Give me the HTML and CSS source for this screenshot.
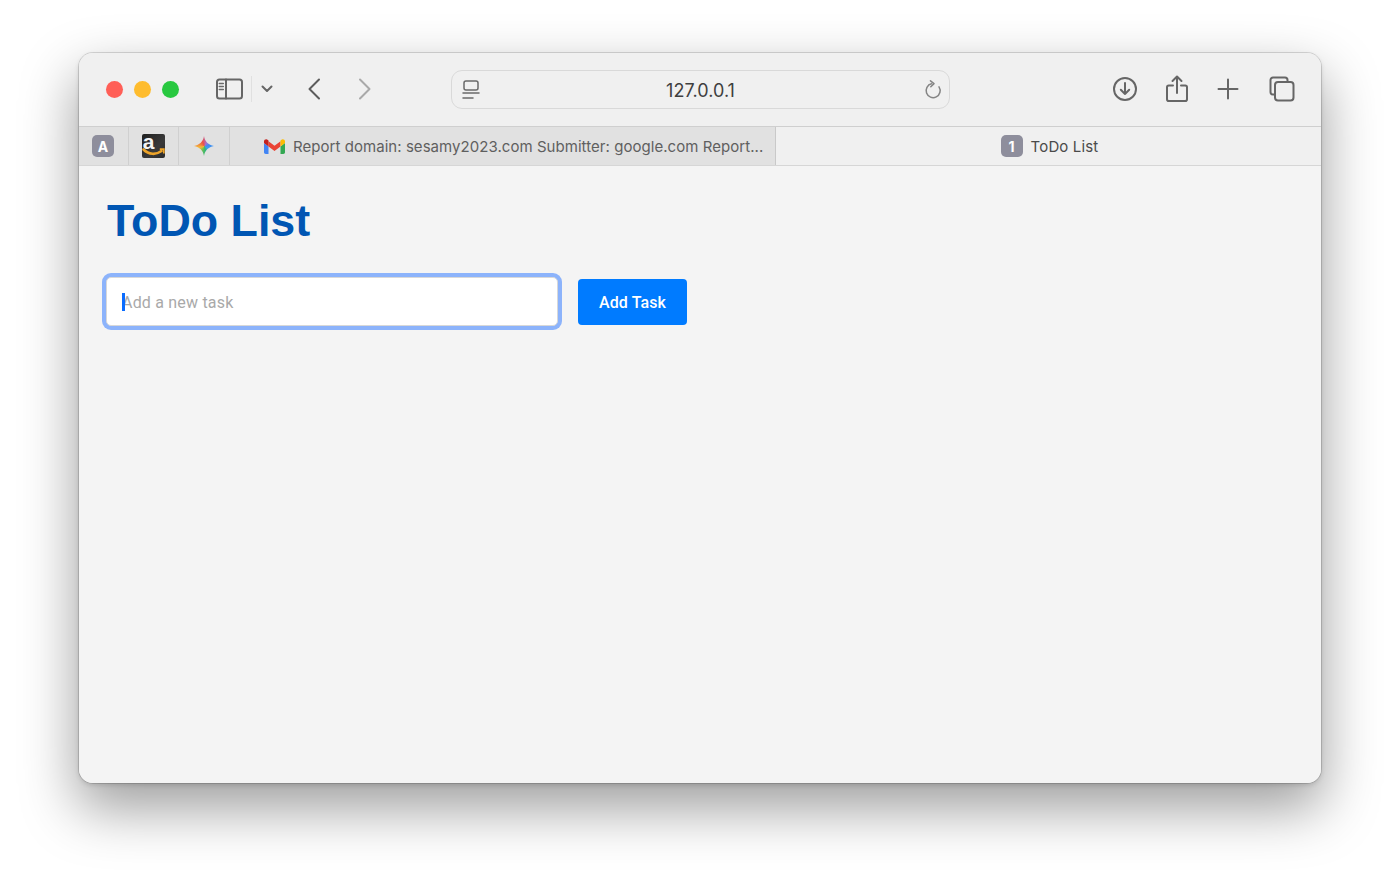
FILE: index.html
```html
<!DOCTYPE html>
<html lang="en">
<head>
<meta charset="utf-8">
<title>ToDo List</title>
<link rel="stylesheet" href="styles.css">
</head>
<body>
<div class="window">
  <header class="toolbar">
    <div class="lights">
      <span class="light red"></span><span class="light yellow"></span><span class="light green"></span>
    </div>
    <svg class="ic sidebar" width="28" height="22" viewBox="0 0 28 22"><rect x="2" y="1.500" width="25" height="19" rx="2.500" class="s2"/><path d="M11 1.500v19" class="s2"/><path d="M4.300 5.500h4M4.300 8.500h4M4.300 11.500h4" class="s15"/></svg>
    <span class="divider"></span>
    <svg class="ic chev" width="12" height="8" viewBox="0 0 12 8"><path d="M1.500 1.500 6 6l4.500-4.500" class="s2"/></svg>
    <svg class="ic back" width="14" height="22" viewBox="0 0 14 22"><path d="M12 1.500 2.500 11l9.500 9.500" class="s2"/></svg>
    <svg class="ic fwd" width="14" height="22" viewBox="0 0 14 22"><path d="M2 1.500 11.500 11 2 20.500" class="s2"/></svg>
    <div class="url">
      <svg class="ic" width="18" height="20" viewBox="0 0 18 20"><rect x="2" y="1" width="14" height="9" rx="2" class="s15"/><path d="M1 13h16M1 18h10" class="s15"/></svg>
      <span class="addr">127.0.0.1</span>
      <svg class="ic reload" width="18" height="20" viewBox="0 0 18 20"><path d="M7.500 3.800a7 7 0 1 0 7.500 3" class="s15"/><path d="M6.500 0.800 10 3.600 6.800 6.800" class="s15"/></svg>
    </div>
    <div class="actions">
      <svg class="ic" width="26" height="26" viewBox="0 0 26 26"><circle cx="13" cy="13" r="11" class="s2"/><path d="M13 7v11M8.800 13.800 13 18l4.200-4.200" class="s2"/></svg>
      <svg class="ic" width="24" height="28" viewBox="0 0 24 28"><path d="M8 10.500H3.800a1.800 1.800 0 0 0-1.800 1.800v12a1.800 1.800 0 0 0 1.800 1.800h16.400a1.800 1.800 0 0 0 1.800-1.800v-12a1.800 1.800 0 0 0-1.800-1.800H16" class="s2"/><path d="M12 18V2M7.500 6 12 1.500 16.500 6" class="s2"/></svg>
      <svg class="ic plus" width="22" height="22" viewBox="0 0 22 22"><path d="M11 1.500v19M1.500 11h19" class="s2"/></svg>
      <svg class="ic copies" width="26" height="26" viewBox="0 0 26 26"><path d="M5 18.500H4a2.500 2.500 0 0 1-2.500-2.500V4A2.500 2.500 0 0 1 4 1.500h12A2.500 2.500 0 0 1 18.500 4v1" class="s2"/><rect x="6" y="6" width="18.500" height="18.500" rx="3" class="s2"/></svg>
    </div>
  </header>
  <nav class="tabs">
    <div class="pin pin-nudge"><span class="badge">A</span></div>
    <div class="pin pin-nudge">
      <svg class="amz-logo" width="23" height="24" viewBox="0 0 23 24"><defs><linearGradient id="amzbg" x1="0" y1="0" x2="1" y2="1"><stop offset="0" stop-color="#1f1f1f"/><stop offset=".6" stop-color="#3a3a3a"/><stop offset="1" stop-color="#2a2a2a"/></linearGradient></defs><rect width="23" height="24" rx="2" fill="url(#amzbg)"/><text x=".8" y="15" class="amz">a</text><path d="M1.500 15.500c5.500 5.500 12.500 5.500 18 1.500" class="amz-smile"/><path d="M17.800 15.200h4v4.300" class="amz-arrow"/></svg>
    </div>
    <div class="pin pin-g"><span class="gem"></span></div>
    <div class="tab tab-inactive">
      <svg class="gmail" width="21" height="15" viewBox="0 0 21 15"><path d="M0 4v9.300C0 14.200.8 15 1.700 15h2.800V7.500z" fill="#4285f4"/><path d="M21 4v9.300c0 .9-.8 1.700-1.700 1.700h-2.800V7.500z" fill="#34a853"/><path d="M4.500 2.300 10.500 6.800l6-4.500v5.200L10.500 12l-6-4.500z" fill="#ea4335"/><path d="M0 2.500C0 .6 2.300-.5 3.900 1L4.500 1.500v6L0 4.100z" fill="#c5221f"/><path d="M21 2.500C21 .6 18.700-.5 17.100 1l-.6.500v6l4.500-3.400z" fill="#fbbc04"/></svg>
      <span class="tab-text">Report domain: sesamy2023.com Submitter: google.com Report...</span>
    </div>
    <div class="tab tab-active">
      <span class="badge">1</span>
      <span class="tab-text">ToDo List</span>
    </div>
  </nav>
  <main class="page">
    <h1>ToDo List</h1>
    <form class="add-form">
      <div class="field">
        <input type="text" placeholder="Add a new task">
        <span class="caret"></span>
      </div>
      <button type="button">Add Task</button>
    </form>
  </main>
</div>
</body>
</html>
```
FILE: styles.css
```css
* { box-sizing: border-box; }
html, body { margin: 0; height: 100%; }
body {
  background: #fff;
  padding: 53px 79px 104px;
  overflow: hidden;
  font-family: Inter, "Liberation Sans", sans-serif;
}
.window {
  height: 730px;
  border-radius: 14px;
  overflow: hidden;
  display: flex;
  flex-direction: column;
  background: #f4f4f4;
  box-shadow: 0 0 0 1px rgba(0,0,0,.13), 0 24px 55px 2px rgba(0,0,0,.38), 0 2px 5px rgba(0,0,0,.14);
}
.ic { display: block; flex: none; }
.s2 { fill: none; stroke: #666; stroke-width: 2; stroke-linecap: round; stroke-linejoin: round; }
.s15 { fill: none; stroke: #6a6a6a; stroke-width: 1.500; stroke-linecap: round; stroke-linejoin: round; }

.toolbar {
  height: 73px;
  flex: none;
  display: flex;
  align-items: center;
  padding: 0 26px 1px 27px;
  background: #f0f0f0;
}
.lights { display: flex; gap: 11px; }
.light { width: 17px; height: 17px; border-radius: 50%; }
.red { background: #ff5f57; }
.yellow { background: #febc2e; }
.green { background: #28c840; }
.sidebar { margin-left: 36px; }
.divider { width: 1px; height: 26px; background: #e0e0e0; margin-left: 8px; }
.chev { margin-left: 9px; }
.back { margin-left: 34px; }
.back .s2 { stroke: #5c5c5c; }
.fwd { margin-left: 37px; }
.fwd .s2 { stroke: #a9a9a9; }
.url {
  margin: 1px 0 0 79px;
  width: 499px;
  height: 39px;
  border: 1px solid #d9d9d9;
  border-radius: 11px;
  background: #f0f0f0;
  display: flex;
  align-items: center;
  justify-content: space-between;
  padding: 0 7px 0 10px;
}
.addr { font-size: 18px; color: #3f3f3f; letter-spacing: .05px; margin-right: 3px; padding-top: 1px; }
.reload .s15 { stroke: #858585; }
.actions {
  margin-left: auto;
  display: flex;
  align-items: center;
  gap: 27px;
}
.plus { margin-left: 1px; }
.copies { margin-left: 3px; }

.tabs {
  height: 40px;
  flex: none;
  display: flex;
  background: #f0f0f0;
  border-top: 1px solid #cfcfcf;
  border-bottom: 1px solid #d6d6d6;
}
.pin {
  width: 50px;
  flex: none;
  display: flex;
  align-items: center;
  justify-content: center;
  background: #e1e1e1;
  border-right: 1px solid #d0d0d0;
}
.pin-nudge { padding-right: 1px; }
.pin-g { width: 51px; }
.gem {
  width: 21px;
  height: 21px;
  background: conic-gradient(from -20deg, #ea4f4b 0deg, #a66fd0 45deg, #3e8cf2 95deg, #3fa0ee 140deg, #2fb673 190deg, #7cc04f 235deg, #f4b93a 280deg, #ee7a3e 320deg, #ea4f4b 360deg);
  clip-path: path("M10.500 .5c.8 5.400 4.400 9.100 10 10-5.600.9-9.200 4.600-10 10-.8-5.400-4.400-9.100-10-10 5.600-.9 9.200-4.600 10-10z");
}
.badge {
  width: 22px;
  height: 22px;
  border-radius: 5px;
  background: #8e8e9c;
  color: #fff;
  font-size: 14px;
  font-weight: 700;
  display: flex;
  align-items: center;
  justify-content: center;
  flex: none;
}
.amz-logo { overflow: visible; }
.amz { font: 700 21px "Liberation Sans", sans-serif; fill: #f4f4f4; }
.amz-smile { fill: none; stroke: #eda42a; stroke-width: 2.600; stroke-linecap: round; }
.amz-arrow { fill: none; stroke: #eda42a; stroke-width: 1.800; }
.gmail { flex: none; }
.tab {
  display: flex;
  align-items: center;
  white-space: nowrap;
}
.tab-inactive {
  width: 546px;
  flex: none;
  background: #e1e1e1;
  border-right: 1px solid #c9c9c9;
  padding-left: 34px;
  gap: 8px;
  color: #5f5f5f;
}
.tab-active {
  flex: 1;
  justify-content: center;
  gap: 8px;
  color: #4a4a4a;
  padding-left: 2px;
}
.tab-text { font-size: 15px; letter-spacing: .05px; }
.tab-active .tab-text { letter-spacing: .15px; }

.page {
  flex: 1;
  padding: 27px 28px;
  background: #f4f4f4;
}
h1 {
  margin: 0 0 30px;
  font: 700 44.800px/54px "Liberation Sans", Arial, sans-serif;
  color: #0056b3;
}
.add-form { display: flex; align-items: center; gap: 20px; }
.field { position: relative; width: 452px; flex: none; margin-left: -1px; }
input {
  display: block;
  width: 100%;
  height: 49px;
  padding: 2px 15px 0;
  border: 1.500px solid #d8d8d8;
  border-radius: 5px;
  background: #fff;
  outline: none;
  box-shadow: 0 0 0 4px #8cb3fb;
  font: 400 16px Roboto, sans-serif;
  letter-spacing: .2px;
  color: #333;
}
input::placeholder { color: #a9a9a9; opacity: 1; }
.caret {
  position: absolute;
  left: 16px;
  top: 16px;
  width: 2.500px;
  height: 18px;
  background: #0a6cff;
}
button {
  width: 109px;
  height: 46px;
  padding: 2px 0 0;
  border: 0;
  border-radius: 4px;
  background: #007bff;
  color: #fff;
  font: 500 16px Roboto, sans-serif;
  letter-spacing: .1px;
}
```
